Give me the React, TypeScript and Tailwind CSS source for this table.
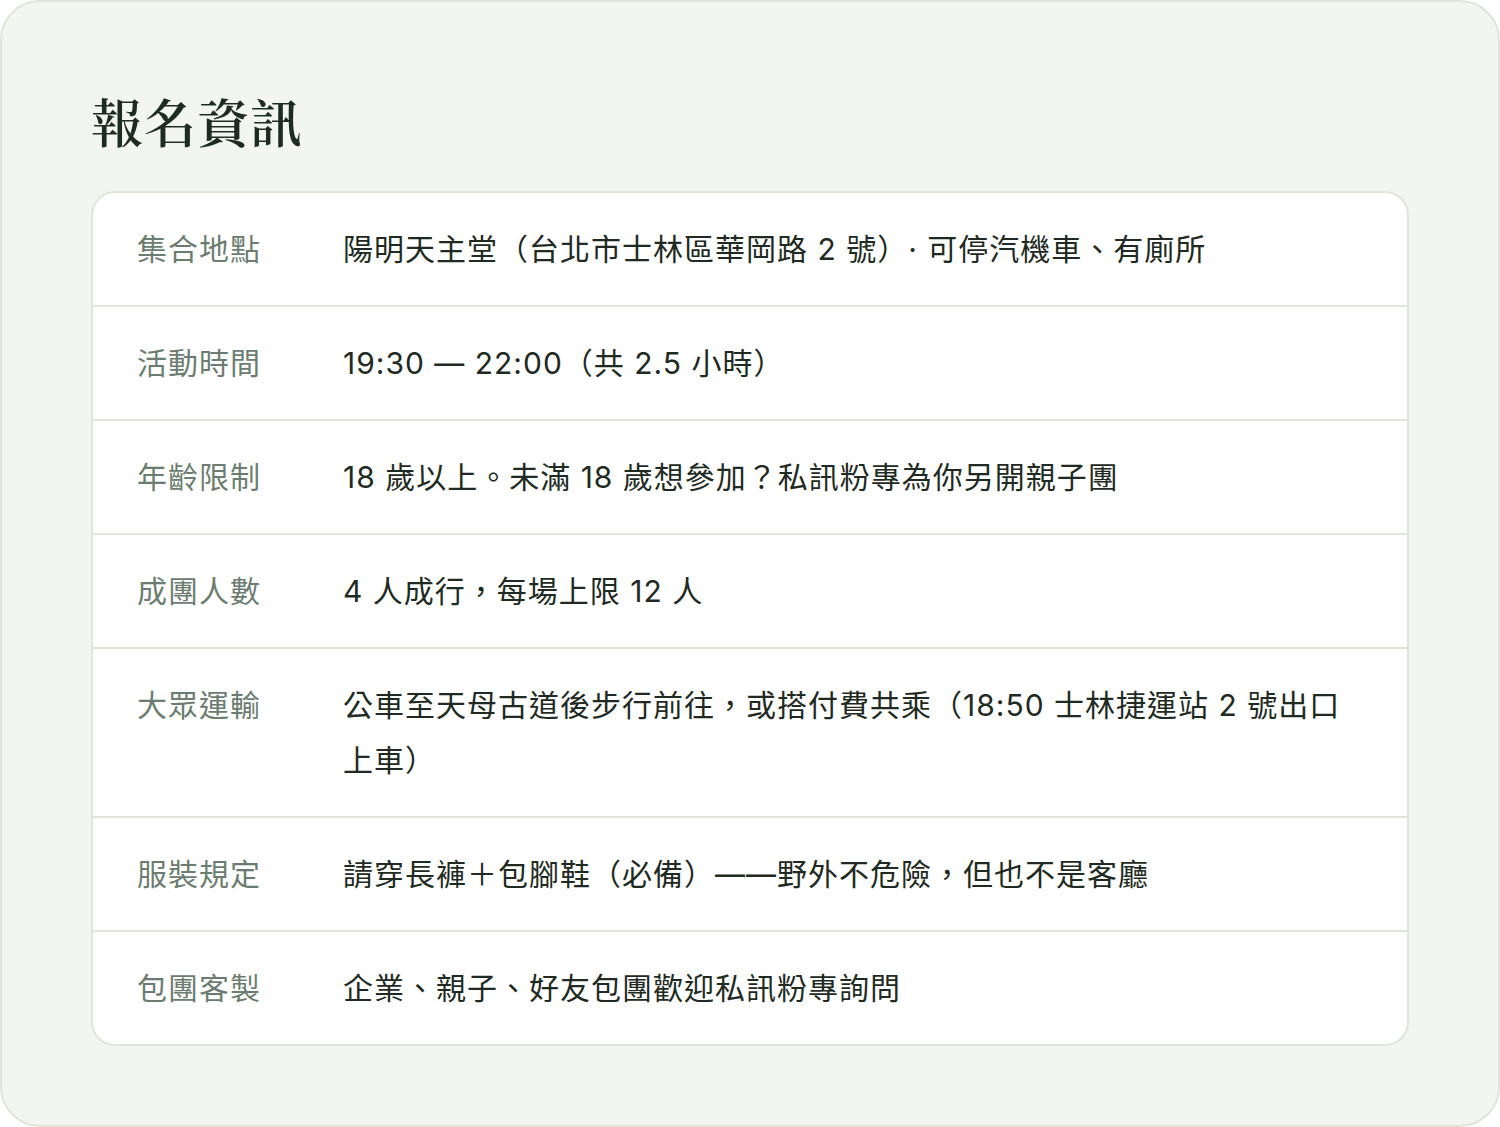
const rows: { label: string; value: string }[] = [
  { label: "集合地點", value: "陽明天主堂（台北市士林區華岡路 2 號）· 可停汽機車、有廁所" },
  { label: "活動時間", value: "19:30 — 22:00（共 2.5 小時）" },
  { label: "年齡限制", value: "18 歲以上。未滿 18 歲想參加？私訊粉專為你另開親子團" },
  { label: "成團人數", value: "4 人成行，每場上限 12 人" },
  {
    label: "大眾運輸",
    value: "公車至天母古道後步行前往，或搭付費共乘（18:50 士林捷運站 2 號出口上車）",
  },
  { label: "服裝規定", value: "請穿長褲＋包腳鞋（必備）——野外不危險，但也不是客廳" },
  { label: "包團客製", value: "企業、親子、好友包團歡迎私訊粉專詢問" },
];

export default function App() {
  return (
    <div className="w-[1500px] h-[1127px] bg-white">
      <div className="h-full rounded-[40px] border-2 border-[#dfe6d9] bg-[#f3f6f0] px-[89px] pt-[83px] font-['Inter','Noto_Sans_CJK_TC',sans-serif]">
        <h2 className="text-[52px] leading-[72px] font-semibold text-[#1c2c21] font-['Noto_Serif_CJK_TC','Liberation_Serif','Noto_Sans_CJK_TC',serif] tracking-[1px] mb-[34px]">
          報名資訊
        </h2>
        <div className="rounded-[24px] border-2 border-[#dfe6d9] bg-white overflow-hidden">
          {rows.map((r, i) => (
            <div
              key={r.label}
              className={
                "grid grid-cols-[206px_1fr] px-[44px] pt-[29px] pb-[28px] text-[30px] leading-[55px] tracking-[1px] [text-spacing-trim:space-all]" +
                (i > 0 ? " border-t-2 border-[#dfe6d9]" : "")
              }
            >
              <div className="text-[#6b7d70]">{r.label}</div>
              <div className="text-[#1e2a22]">{r.value}</div>
            </div>
          ))}
        </div>
      </div>
    </div>
  );
}
